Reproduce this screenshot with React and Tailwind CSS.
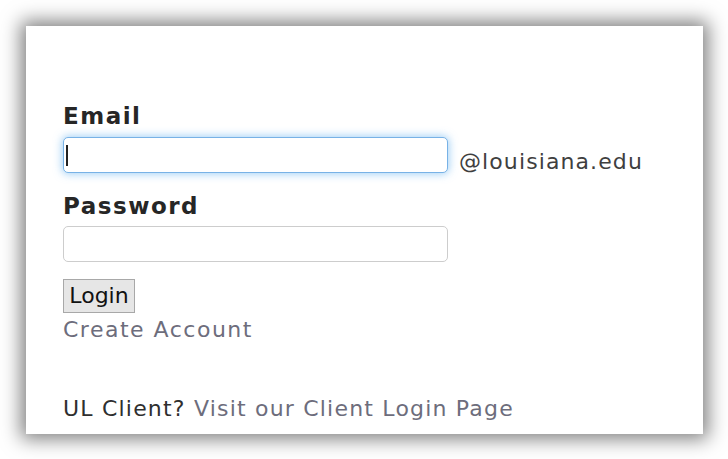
export default function App() {
  return (
    <div className="w-[728px] h-[459px] bg-white pt-[26px] pl-[26px] overflow-hidden" style={{ fontFamily: '"DejaVu Sans", Verdana, sans-serif' }}>
      <div className="w-[677px] h-[408px] bg-white shadow-[0_0_18px_5px_rgba(0,0,0,0.5)] pl-[37px] pt-[78px]">
        <form onSubmit={(e) => e.preventDefault()}>
          <label className="block text-[23px] leading-[24px] font-bold tracking-[1.5px] text-[#262626] mb-[9px]">Email</label>
          <div className="flex items-start gap-[11px] h-[36px]">
            <div className="relative">
              <input
                type="text"
                className="block w-[385px] h-[36px] rounded-[5px] border border-[#78b2e6] bg-white shadow-[0_0_8px_1px_rgba(82,168,236,0.55)] outline-none px-2"
              />
              <span className="absolute left-[3px] top-[8px] w-[2px] h-[21px] bg-[#222]"></span>
            </div>
            <span className="text-[22px] leading-[22px] tracking-[1.1px] text-[#3f3f3f] mt-[14px]">@louisiana.edu</span>
          </div>

          <label className="block text-[23px] leading-[24px] font-bold tracking-[1.5px] text-[#262626] mt-[21px] mb-[8px]">Password</label>
          <input
            type="password"
            className="block w-[385px] h-[36px] rounded-[5px] border border-[#cdcdcd] bg-white outline-none px-2"
          />

          <button
            type="submit"
            className="block mt-[17px] w-[72px] h-[34px] bg-[#e6e6e6] border border-[#a8a8a8] text-[22px] leading-[24px] text-[#111]"
          >
            Login
          </button>
          <a href="#" className="block mt-[5px] text-[22px] leading-[24px] tracking-[1.5px] text-[#6d6d7c]">Create Account</a>
        </form>

        <p className="mt-[55px] text-[22px] leading-[24px] tracking-[1.2px] text-[#2f2f2f]">
          UL Client? <a href="#" className="text-[#6d6d7c]">Visit our Client Login Page</a>
        </p>
      </div>
    </div>
  );
}
